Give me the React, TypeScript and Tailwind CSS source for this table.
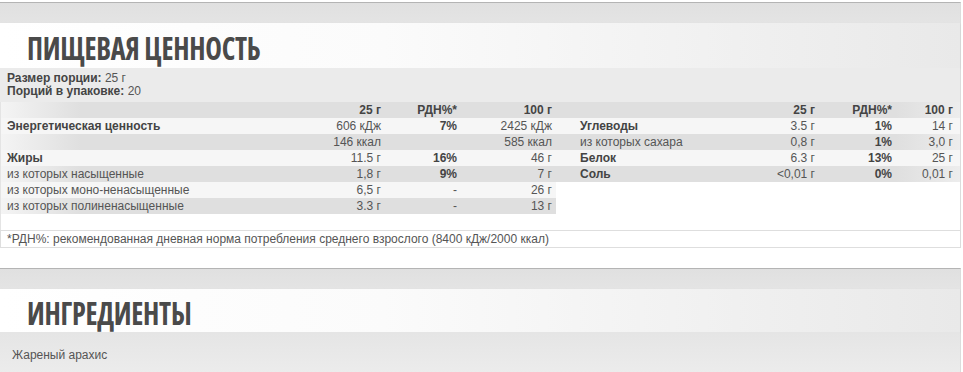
import React from 'react';

type Cell = { text: string; bold?: boolean };

interface RowData {
  label: Cell;
  perServing: string;
  rdn: string;
  per100: string;
}

const leftRows: RowData[] = [
  { label: { text: 'Энергетическая ценность', bold: true }, perServing: '606 кДж', rdn: '7%', per100: '2425 кДж' },
  { label: { text: '' }, perServing: '146 ккал', rdn: '', per100: '585 ккал' },
  { label: { text: 'Жиры', bold: true }, perServing: '11.5 г', rdn: '16%', per100: '46 г' },
  { label: { text: 'из которых насыщенные' }, perServing: '1,8 г', rdn: '9%', per100: '7 г' },
  { label: { text: 'из которых моно-ненасыщенные' }, perServing: '6,5 г', rdn: '-', per100: '26 г' },
  { label: { text: 'из которых полиненасыщенные' }, perServing: '3.3 г', rdn: '-', per100: '13 г' },
];

const rightRows: RowData[] = [
  { label: { text: 'Углеводы', bold: true }, perServing: '3.5 г', rdn: '1%', per100: '14 г' },
  { label: { text: 'из которых сахара' }, perServing: '0,8 г', rdn: '1%', per100: '3,0 г' },
  { label: { text: 'Белок', bold: true }, perServing: '6.3 г', rdn: '13%', per100: '25 г' },
  { label: { text: 'Соль', bold: true }, perServing: '<0,01 г', rdn: '0%', per100: '0,01 г' },
];

const leftStripe = 'bg-[linear-gradient(to_right,#f4f4f4,#dfdfdf_80px,#dfdfdf)]';
const rightStripe = 'bg-[linear-gradient(to_right,#dfdfdf,#dfdfdf_340px,#ededed)]';

function Title({ children }: { children: string }) {
  return (
    <h2 className="origin-left scale-x-[0.88] whitespace-nowrap font-['Open_Sans',sans-serif] font-bold [font-stretch:75%] text-[32px] leading-none text-[#4a4a4a] tracking-[-0.3px]">
      {children}
    </h2>
  );
}

export default function App() {
  return (
    <div className="w-[963px] h-[372px] overflow-hidden bg-white font-['Liberation_Sans',Arial,sans-serif] text-[12px] text-[#555]">
      <div className="h-[2px]" />

      {/* Nutrition facts */}
      <section className="w-[961px] border-t border-[#b4b4b4] border-r border-r-[#dcdcdc]">
        <div className="h-[20px] bg-[linear-gradient(to_bottom,#e0e0e0,#e4e4e4)]" />
        <div className="h-[45px] pt-[9px] pl-[27px] bg-[linear-gradient(to_right,#ffffff,#fbfbfb_40%,#e9e9e9)] shadow-[0_1px_2px_rgba(0,0,0,0.08)]">
          <Title>ПИЩЕВАЯ ЦЕННОСТЬ</Title>
        </div>

        <div className="bg-[#ebebeb] px-[7px] pt-[4px] pb-[4px] leading-[13px]">
          <div>
            <span className="font-bold text-[#444]">Размер порции:</span> 25 г
          </div>
          <div>
            <span className="font-bold text-[#444]">Порций в упаковке:</span> 20
          </div>
        </div>

        <div className="flex h-[128px] border-l border-[#e4e4e4] bg-white leading-[16px]">
          {/* left table */}
          <div className="w-[555px]">
            <div className={`flex h-[16px] font-bold text-[#444] ${leftStripe}`}>
              <div className="w-[309px]" />
              <div className="w-[71px] text-right">25 г</div>
              <div className="w-[76px] text-right">РДН%*</div>
              <div className="w-[95px] text-right">100 г</div>
            </div>
            {leftRows.map((row, i) => (
              <div
                key={i}
                className={`flex h-[16px] ${i % 2 === 1 ? leftStripe : 'bg-[#f6f6f6]'}`}
              >
                <div className={`w-[309px] pl-[6px] ${row.label.bold ? 'font-bold text-[#444]' : ''}`}>
                  {row.label.text}
                </div>
                <div className="w-[71px] text-right">{row.perServing}</div>
                <div className={`w-[76px] text-right ${row.rdn === '-' ? '' : 'font-bold text-[#444]'}`}>
                  {row.rdn}
                </div>
                <div className="w-[95px] text-right">{row.per100}</div>
              </div>
            ))}
          </div>

          {/* right table */}
          <div className="w-[404px]">
            <div className={`flex h-[16px] font-bold text-[#444] ${rightStripe}`}>
              <div className="w-[184px]" />
              <div className="w-[75px] text-right">25 г</div>
              <div className="w-[77px] text-right">РДН%*</div>
              <div className="w-[61px] text-right">100 г</div>
            </div>
            {rightRows.map((row, i) => (
              <div
                key={i}
                className={`flex h-[16px] ${i % 2 === 1 ? rightStripe : 'bg-[#f6f6f6]'}`}
              >
                <div className={`w-[184px] pl-[24px] ${row.label.bold ? 'font-bold text-[#444]' : ''}`}>
                  {row.label.text}
                </div>
                <div className="w-[75px] text-right">{row.perServing}</div>
                <div className="w-[77px] text-right font-bold text-[#444]">{row.rdn}</div>
                <div className="w-[61px] text-right">{row.per100}</div>
              </div>
            ))}
          </div>
        </div>

        <div className="h-[18px] border-t border-b border-l border-[#dedede] bg-white pl-[6px] leading-[16px]">
          *РДН%: рекомендованная дневная норма потребления среднего взрослого (8400 кДж/2000 ккал)
        </div>
      </section>

      <div className="h-[20px]" />

      {/* Ingredients */}
      <section className="w-[961px] border-t border-[#b4b4b4] border-r border-r-[#dcdcdc]">
        <div className="h-[20px] bg-[linear-gradient(to_bottom,#e0e0e0,#e4e4e4)]" />
        <div className="h-[43px] pt-[8px] pl-[27px] bg-[linear-gradient(to_right,#ffffff,#fbfbfb_40%,#e9e9e9)] shadow-[0_1px_2px_rgba(0,0,0,0.08)]">
          <Title>ИНГРЕДИЕНТЫ</Title>
        </div>
        <div className="h-[60px] pt-[16px] pl-[12px] bg-[linear-gradient(to_bottom,#e5e5e5,#efefef)] leading-[14px]">
          Жареный арахис
        </div>
      </section>
    </div>
  );
}
